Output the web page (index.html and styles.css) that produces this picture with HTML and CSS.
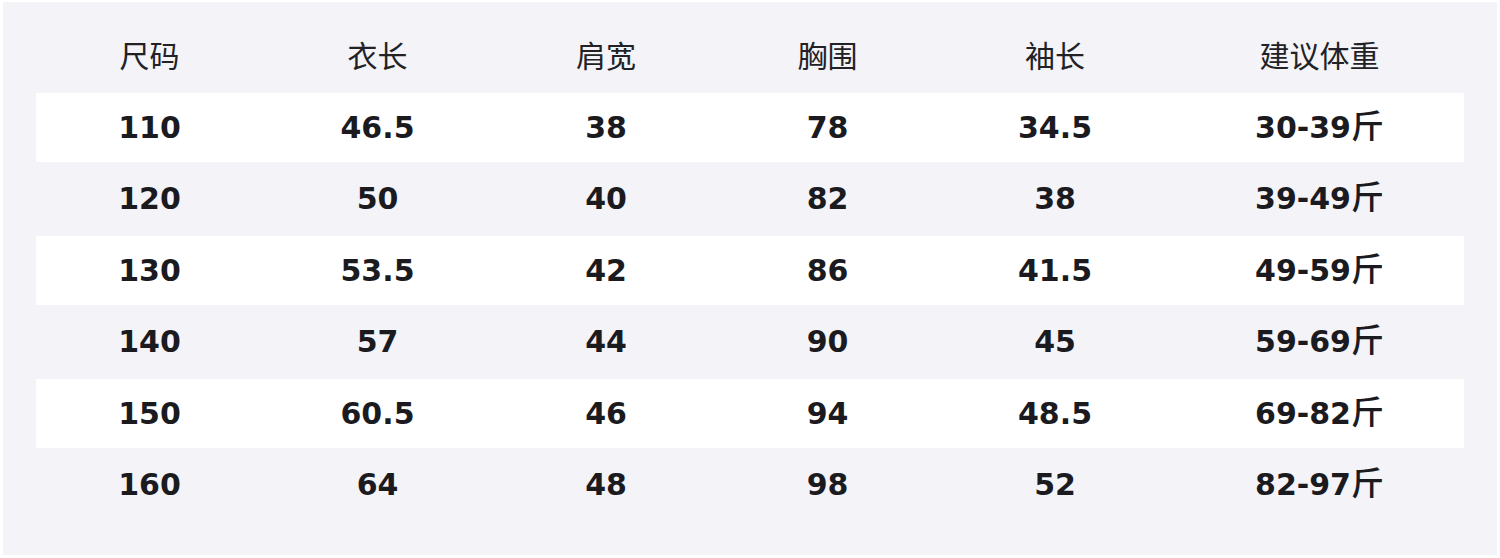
FILE: index.html
```html
<!DOCTYPE html>
<html lang="zh">
<head>
<meta charset="utf-8">
<title>尺码表</title>
<link rel="stylesheet" href="styles.css">
</head>
<body>
<div class="panel">
  <div class="table">
    <div class="row head">
      <div>尺码</div><div>衣长</div><div>肩宽</div><div>胸围</div><div>袖长</div><div>建议体重</div>
    </div>
    <div class="row odd">
      <div>110</div><div>46.5</div><div>38</div><div>78</div><div>34.5</div><div>30-39<span class="unit">斤</span></div>
    </div>
    <div class="row even">
      <div>120</div><div>50</div><div>40</div><div>82</div><div>38</div><div>39-49<span class="unit">斤</span></div>
    </div>
    <div class="row odd">
      <div>130</div><div>53.5</div><div>42</div><div>86</div><div>41.5</div><div>49-59<span class="unit">斤</span></div>
    </div>
    <div class="row even">
      <div>140</div><div>57</div><div>44</div><div>90</div><div>45</div><div>59-69<span class="unit">斤</span></div>
    </div>
    <div class="row odd">
      <div>150</div><div>60.5</div><div>46</div><div>94</div><div>48.5</div><div>69-82<span class="unit">斤</span></div>
    </div>
    <div class="row even">
      <div>160</div><div>64</div><div>48</div><div>98</div><div>52</div><div>82-97<span class="unit">斤</span></div>
    </div>
  </div>
</div>
</body>
</html>
```

FILE: styles.css
```css
html, body {
  margin: 0;
  padding: 0;
  background: #ffffff;
}

.panel {
  margin: 2px 3px 0 3px;
  height: 553px;
  box-sizing: border-box;
  padding: 19px 33px 0 33px;
  background: #f3f3f8;
}

.table {
  display: flex;
  flex-direction: column;
}

.row {
  display: grid;
  grid-template-columns: 227px 229px 228px 215px 240px 289px;
  align-items: center;
  justify-items: center;
  font-family: "DejaVu Sans", "Noto Sans CJK SC", sans-serif;
  font-weight: bold;
  font-size: 30px;
  color: #1b1b1f;
}

.row > div {
  line-height: 1;
  white-space: nowrap;
}

.unit {
  font-family: "Noto Sans CJK SC", sans-serif;
  font-weight: 500;
  font-size: 33px;
  line-height: 0;
}

.head {
  height: 72px;
  box-sizing: border-box;
  padding-bottom: 6px;
  font-family: "Noto Sans CJK SC", sans-serif;
  font-weight: normal;
  font-size: 30px;
  color: #222226;
}

.odd {
  height: 69px;
  background: #ffffff;
}

.even {
  height: 74px;
}
```
